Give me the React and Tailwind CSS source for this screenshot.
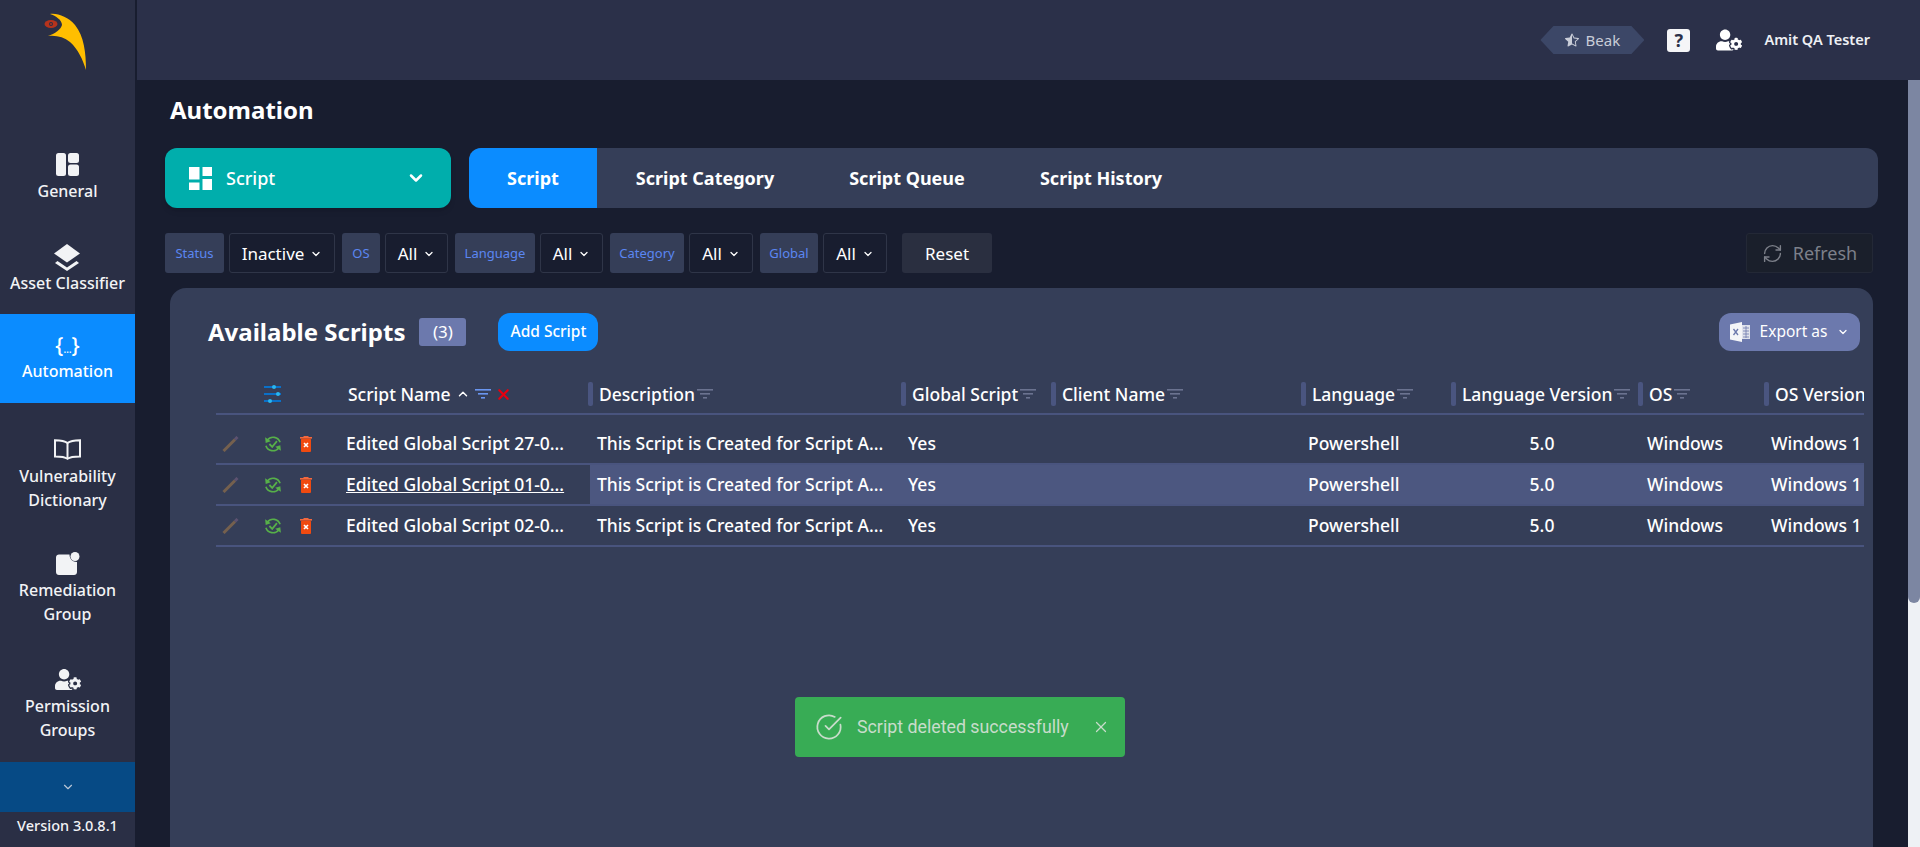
import { ChevronDown, ChevronUp, RefreshCw, X, CircleCheckBig } from 'lucide-react'
import { FaUserCog } from 'react-icons/fa'
import { BsStarHalf } from 'react-icons/bs'

function Logo() {
  return (
    <svg width="60" height="62" viewBox="0 0 60 62" className="absolute left-[42px] top-[11px]">
      <path d="M8 3 C 16 2 26 6 33 14 C 42 25 44 42 44 59 C 41 49 36 38 28 31 C 22 26 14 24 6 25 C 13 23 19 18 20 14 C 20 9 14 5 8 3 Z" fill="#ffbe00" />
      <ellipse cx="9" cy="13" rx="6.5" ry="4" fill="#b5331c" />
      <circle cx="9" cy="13" r="2" fill="#2a2f45" />
      <circle cx="9" cy="13" r="1" fill="#b5331c" />
    </svg>
  )
}

function GeneralIcon() {
  return (
    <svg width="23" height="23" viewBox="0 0 23 23" fill="#f2f3f5">
      <rect x="0" y="0" width="10" height="23" rx="2.5" />
      <rect x="12" y="0" width="11" height="10" rx="2.5" />
      <rect x="12" y="11.5" width="11" height="11.5" rx="2.5" />
    </svg>
  )
}

function LayersIcon() {
  return (
    <svg width="26" height="27" viewBox="0 0 26 27" fill="#f2f3f5">
      <path d="M13 0 L26 9.5 L13 18.5 L0 9.5 Z" />
      <path d="M1 19 L13 27 L25 19 L22.5 17 L13 23.5 L3.5 17 Z" />
    </svg>
  )
}

function BookIcon() {
  return (
    <svg width="27" height="21" viewBox="0 0 27 21" fill="none" stroke="#f2f3f5" strokeWidth="2">
      <path d="M13.5 4 C11 2 6 1.2 1 1.2 V17.5 C6 17.5 11 18 13.5 19.8 C16 18 21 17.5 26 17.5 V1.2 C21 1.2 16 2 13.5 4 Z" />
      <path d="M13.5 4 V19.8" />
    </svg>
  )
}

function GroupIcon() {
  return (
    <svg width="24" height="23" viewBox="0 0 24 23" fill="#f2f3f5">
      <path d="M3 2.5 H13.5 C13.5 7 16.5 10 21 10 V20 C21 21.7 19.7 23 18 23 H3 C1.3 23 0 21.7 0 20 V5.5 C0 3.8 1.3 2.5 3 2.5 Z" />
      <circle cx="19" cy="4.5" r="4.5" />
    </svg>
  )
}

function LayoutIcon() {
  return (
    <svg width="23" height="23" viewBox="0 0 23 23" fill="#ffffff">
      <rect x="0" y="0" width="10.5" height="12.5" />
      <rect x="0" y="15.5" width="10.5" height="7.5" />
      <rect x="13.5" y="0" width="9.5" height="9" />
      <rect x="13.5" y="12" width="9.5" height="11" />
    </svg>
  )
}

function ExcelIcon() {
  return (
    <svg width="20" height="20" viewBox="0 0 20 20" className="shrink-0">
      <path d="M0 2.5 L12 0 V20 L0 17.5 Z" fill="#f4f5f8" />
      <path d="M3.5 7 L8 13 M8 7 L3.5 13" stroke="#6c79ad" strokeWidth="1.3" />
      <path d="M12 3 H20 V17 H12 Z" fill="#dfe2ec" />
      <path d="M13 6 H19 M13 9 H19 M13 12 H19 M13 15 H19 M16 4 V16" stroke="#6c79ad" strokeWidth="0.8" />
    </svg>
  )
}

function FilterLines({ color = '#6b7390' }) {
  return (
    <svg width="16" height="12" viewBox="0 0 16 12" fill={color} className="shrink-0">
      <rect x="0" y="1" width="16" height="1.6" />
      <rect x="3" y="5" width="10" height="1.6" />
      <rect x="6" y="9" width="4" height="1.6" />
    </svg>
  )
}

function SliderIcon() {
  return (
    <svg width="18" height="20" viewBox="0 0 18 20" className="ml-[48px]">
      <rect x="0" y="2" width="17" height="2" fill="#0a70c8" />
      <rect x="0" y="9" width="17" height="2" fill="#0a70c8" />
      <rect x="0" y="16" width="17" height="2" fill="#0a70c8" />
      <circle cx="10" cy="3" r="2" fill="#29b6f0" />
      <circle cx="14" cy="10" r="2" fill="#29b6f0" />
      <circle cx="6" cy="17" r="2" fill="#29b6f0" />
    </svg>
  )
}

function PencilIcon() {
  return (
    <svg width="17" height="16" viewBox="0 0 17 16" className="shrink-0">
      <path d="M1.5 15 L13 3.5" stroke="#75604e" strokeWidth="3" />
      <path d="M13 3.5 L15.5 1" stroke="#5d5270" strokeWidth="3" />
    </svg>
  )
}

function SyncCheckIcon() {
  return (
    <svg width="18" height="18" viewBox="0 0 16 16" fill="none" stroke="#57b049" strokeWidth="1.5" className="shrink-0">
      <path d="M3 4.5 A6.5 6.5 0 0 1 14.3 6.5" />
      <path d="M13 11.5 A6.5 6.5 0 0 1 1.7 9.5" />
      <path d="M1 2 L1.5 7 L6 5.5 Z" fill="#57b049" stroke="none" />
      <path d="M15 14 L14.5 9 L10 10.5 Z" fill="#57b049" stroke="none" />
      <path d="M4.8 8 L7.3 10.5 L11.5 5.5" strokeWidth="1.6" />
    </svg>
  )
}

function TrashIcon() {
  return (
    <svg width="12" height="16" viewBox="0 0 12 16" className="shrink-0">
      <rect x="0" y="1" width="12" height="1.6" fill="#f2683e" />
      <rect x="3.5" y="0" width="5" height="2" fill="#f2683e" />
      <rect x="1" y="2.6" width="10" height="13.4" rx="1" fill="#f04a10" />
      <path d="M4 7 L8 11 M8 7 L4 11" stroke="#ffffff" strokeWidth="1.6" />
    </svg>
  )
}

const filters = [
  { label: 'Status', value: 'Inactive', labelW: 'w-[59px]', selectW: 'w-[106px]' },
  { label: 'OS', value: 'All', labelW: 'w-[38px]', selectW: 'w-[63px]' },
  { label: 'Language', value: 'All', labelW: 'w-[80px]', selectW: 'w-[63px]' },
  { label: 'Category', value: 'All', labelW: 'w-[74px]', selectW: 'w-[64px]' },
  { label: 'Global', value: 'All', labelW: 'w-[58px]', selectW: 'w-[64px]' },
]

const columns = [
  { name: 'Description', w: 'w-[311px]', first: true },
  { name: 'Global Script', w: 'w-[150px]' },
  { name: 'Client Name', w: 'w-[250px]' },
  { name: 'Language', w: 'w-[150px]' },
  { name: 'Language Version', w: 'w-[187px]' },
  { name: 'OS', w: 'w-[126px]' },
  { name: 'OS Version', w: 'w-[100px]', noFilter: true },
]

const rows = ['Edited Global Script 27-0...', 'Edited Global Script 01-0...', 'Edited Global Script 02-0...']

export default function App() {
  return (
    <div className="flex h-[847px] w-[1920px] overflow-hidden bg-[#181d2f] font-['Noto_Sans',sans-serif] text-white">
      {/* Sidebar */}
      <aside className="relative flex w-[135px] shrink-0 flex-col items-center bg-[#2a2f45] text-[16px] font-medium leading-[24px] text-[#f2f3f5]">
        <Logo />
        <div className="mt-[153px] flex flex-col items-center">
          <div className="mb-[3px] h-[23px]"><GeneralIcon /></div>
          <span>General</span>
        </div>
        <div className="mt-[41px] flex flex-col items-center">
          <div className="h-[27px]"><LayersIcon /></div>
          <span className="whitespace-nowrap">Asset Classifier</span>
        </div>
        <div className="mt-[19px] flex w-full flex-col items-center bg-[#0b8cff] pb-[20px] pt-[20px] text-white">
          <div className="mb-[3px] h-[22px] text-[21px] font-medium leading-[22px]">{'{'}<span className="text-[10px]">…</span>{'}'}</div>
          <span>Automation</span>
        </div>
        <div className="mt-[36px] flex flex-col items-center text-center">
          <div className="mb-[4px] h-[21px]"><BookIcon /></div>
          <span>Vulnerability<br />Dictionary</span>
        </div>
        <div className="mt-[40px] flex flex-col items-center text-center">
          <div className="mb-[3px] h-[23px]"><GroupIcon /></div>
          <span>Remediation<br />Group</span>
        </div>
        <div className="mt-[43px] flex flex-col items-center text-center">
          <FaUserCog className="mb-[4px] h-[21px] w-[26px]" />
          <span>Permission<br />Groups</span>
        </div>
        <div className="mt-auto flex h-[50px] w-full items-center justify-center bg-[#064a85]">
          <ChevronDown size={14} className="text-[#b9c6d6]" />
        </div>
        <div className="flex h-[35px] items-center whitespace-nowrap pb-[10px] text-[14.5px] font-medium">Version 3.0.8.1</div>
      </aside>

      <main className="flex min-w-0 flex-1 flex-col pl-[2px]">
        {/* Top bar */}
        <header className="flex h-[80px] shrink-0 items-center justify-end bg-[#2b3049] pr-[50px]">
          <div className="flex h-[28px] w-[104px] items-center justify-center gap-[7px] bg-[#3c4767] text-[15px] text-[#c9cdd8] [clip-path:polygon(13px_0,91px_0,100%_50%,91px_100%,13px_100%,0_50%)]">
            <BsStarHalf size={14} />
            <span>Beak</span>
          </div>
          <div className="ml-[23px] flex h-[23px] w-[23px] items-center justify-center rounded-[3px] bg-[#f5f5f7] text-[18px] font-bold text-[#2b3049]">?</div>
          <FaUserCog size={26} className="ml-[26px]" />
          <span className="ml-[22px] text-[14.5px] font-semibold text-[#eef0f4]">Amit QA Tester</span>
        </header>

        <div className="flex min-h-0 flex-1">
          <div className="flex min-w-0 flex-1 flex-col pl-[28px] pr-[30px]">
            <h1 className="ml-[5px] flex h-[68px] shrink-0 items-start pt-[13px] text-[24px] font-bold leading-[34px]">Automation</h1>

            {/* Section picker and tabs */}
            <div className="flex h-[60px] shrink-0 gap-[18px]">
              <div className="flex w-[286px] items-center rounded-[12px] bg-[#00aeac] pl-[24px] pr-[25px] shadow-md">
                <LayoutIcon />
                <span className="ml-[14px] flex-1 text-[18px] font-medium">Script</span>
                <ChevronDown size={20} strokeWidth={3} />
              </div>
              <div className="flex flex-1 overflow-hidden rounded-[12px] bg-[#353e58] text-[18px] font-bold">
                <div className="flex w-[128px] items-center justify-center bg-[#0b8cff]">Script</div>
                <div className="flex w-[216px] items-center justify-center">Script Category</div>
                <div className="flex w-[188px] items-center justify-center">Script Queue</div>
                <div className="flex w-[200px] items-center justify-center">Script History</div>
              </div>
            </div>

            {/* Filters */}
            <div className="mt-[25px] flex h-[40px] shrink-0 items-stretch">
              {filters.map(({ label, value, labelW, selectW }) => (
                <div key={label} className="mr-[7px] flex gap-[5px]">
                  <div className={`flex ${labelW} items-center justify-center rounded-[3px] bg-[#353e58] pt-px text-[13px] text-[#5b86f2]`}>{label}</div>
                  <div className={`flex ${selectW} items-center justify-center gap-[6px] rounded-[3px] border border-[#2f3548] pt-px text-[17px]`}>
                    <span>{value}</span>
                    <ChevronDown size={12} strokeWidth={2.5} />
                  </div>
                </div>
              ))}
              <div className="ml-[8px] flex w-[90px] items-center justify-center rounded-[3px] bg-[#2a2f40] pt-px text-[17px]">Reset</div>
              <div className="ml-auto mr-[5px] flex w-[127px] items-center justify-center gap-[10px] rounded-[3px] border border-[#232836] bg-[#1a1f2b] text-[18px] text-[#7d808a]">
                <RefreshCw size={21} strokeWidth={1.6} />
                <span>Refresh</span>
              </div>
            </div>

            {/* Scripts card */}
            <section className="ml-[5px] mr-[5px] mt-[15px] min-h-0 flex-1 rounded-t-[16px] bg-[#353e58] pl-[46px] pr-[9px] pt-[25px]">
              <div className="flex h-[38px] items-center">
                <h2 className="-ml-[8px] text-[24px] font-bold">Available Scripts</h2>
                <span className="ml-[14px] flex h-[28px] w-[47px] items-center justify-center rounded-[3px] bg-[#6c79ad] text-[17px]">(3)</span>
                <button className="ml-[32px] h-[38px] w-[100px] rounded-[12px] bg-[#0b8cff] text-[15.5px] font-medium">Add Script</button>
                <button className="ml-auto mr-[4px] flex h-[38px] w-[141px] items-center justify-center gap-[10px] rounded-[12px] bg-[#6c79ad] text-[15.5px]">
                  <ExcelIcon />
                  <span>Export as</span>
                  <ChevronDown size={12} strokeWidth={2.5} />
                </button>
              </div>

              <div className="mt-[24px] w-[1648px] overflow-hidden">
                <table className="w-[1648px] table-fixed border-separate border-spacing-0 text-[17.5px] font-medium">
                  <colgroup>
                    <col className="w-[130px]" />
                    <col className="w-[244px]" />
                    {columns.map(({ name, w }) => <col key={name} className={w} />)}
                  </colgroup>
                  <thead>
                    <tr className="h-[40px]">
                      <th className="border-b-2 border-[#49547e] p-0"><SliderIcon /></th>
                      <th className="border-b-2 border-[#49547e] p-0 pl-[2px] text-left font-medium">
                        <span className="flex items-center gap-[5px] whitespace-nowrap">
                          Script Name
                          <ChevronUp size={14} strokeWidth={2.5} />
                          <FilterLines color="#6a96f0" />
                          <X size={17} strokeWidth={3} className="-ml-px text-[#e8000f]" />
                        </span>
                      </th>
                      {columns.map(({ name, noFilter, first }) => (
                        <th key={name} className="border-b-2 border-[#49547e] p-0 text-left font-medium">
                          <span className={`flex items-center whitespace-nowrap ${first ? '-ml-[2px]' : ''}`}>
                            <span className="mr-[6px] h-[24px] w-[5px] shrink-0 rounded-[2px] bg-[#4a5580]" />
                            {name}
                            {!noFilter && <span className="ml-[2px]"><FilterLines /></span>}
                          </span>
                        </th>
                      ))}
                    </tr>
                  </thead>
                  <tbody>
                    <tr className="h-[9px]"><td colSpan={9} /></tr>
                    {rows.map((name, i) => {
                      const cell = `whitespace-nowrap border-b-2 border-[#49547e] p-0 ${i === 1 ? 'bg-[#4c5780]' : ''}`
                      return (
                        <tr key={name} className="h-[41px]">
                          <td className="border-b-2 border-[#49547e] p-0">
                            <span className="flex items-center">
                              <span className="ml-[6px]"><PencilIcon /></span>
                              <span className="ml-[25px]"><SyncCheckIcon /></span>
                              <span className="ml-[18px]"><TrashIcon /></span>
                            </span>
                          </td>
                          <td className="whitespace-nowrap border-b-2 border-[#49547e] p-0">
                            <span className={i === 1 ? 'underline' : ''}>{name}</span>
                          </td>
                          <td className={`${cell} pl-[7px]`}>This Script is Created for Script A...</td>
                          <td className={`${cell} pl-[7px]`}>Yes</td>
                          <td className={cell} />
                          <td className={`${cell} pl-[7px]`}>Powershell</td>
                          <td className={`${cell} pr-[5px] text-center`}>5.0</td>
                          <td className={`${cell} pl-[9px]`}>Windows</td>
                          <td className={`${cell} pl-[7px]`}>Windows 1</td>
                        </tr>
                      )
                    })}
                  </tbody>
                </table>
              </div>
            </section>
          </div>

          {/* Page scrollbar */}
          <div className="w-[12px] shrink-0 bg-[#eef1f5]">
            <div className="h-[523px] rounded-b-[6px] bg-[#7c86a2]" />
          </div>
        </div>
      </main>

      {/* Toast */}
      <div className="absolute left-[795px] top-[697px] flex h-[60px] w-[330px] items-center rounded-[4px] bg-[#38ac55] pl-[20px] font-['Roboto',sans-serif] text-[17.8px] text-[#c8dccb]">
        <CircleCheckBig size={28} strokeWidth={1.5} />
        <span className="ml-[14px] flex-1">Script deleted successfully</span>
        <X size={18} strokeWidth={1.6} className="mr-[15px]" />
      </div>
    </div>
  )
}
